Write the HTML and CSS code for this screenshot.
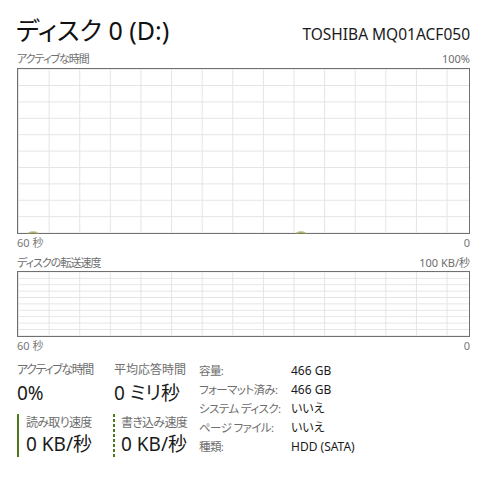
FILE: index.html
```html
<!DOCTYPE html>
<html lang="ja">
<head>
<meta charset="utf-8">
<title>ディスク 0 (D:)</title>
<link rel="stylesheet" href="styles.css">
</head>
<body>
<div class="page">
  <header class="head">
    <h1 class="title">ディスク 0 (D:)</h1>
    <div class="model">TOSHIBA MQ01ACF050</div>
  </header>

  <div class="axis axis-top first"><span class="kana">アクティブな時間</span><span>100%</span></div>
  <div class="chart chart-active">
    <span class="blip blip-a"></span>
    <span class="blip blip-b"></span>
  </div>
  <div class="axis axis-bottom"><span>60 秒</span><span>0</span></div>

  <div class="axis axis-top second"><span class="kana">ディスクの転送速度</span><span>100 KB/秒</span></div>
  <div class="chart chart-transfer"></div>
  <div class="axis axis-bottom"><span>60 秒</span><span>0</span></div>

  <section class="stats">
    <div class="col col-1">
      <div class="label kana-wide">アクティブな時間</div>
      <div class="value">0%</div>
      <div class="rate rate-read">
        <div class="label kana-some">読み取り速度</div>
        <div class="value">0 KB/秒</div>
      </div>
    </div>
    <div class="col col-2">
      <div class="label pad">平均応答時間</div>
      <div class="value pad">0 ミリ秒</div>
      <div class="rate rate-write">
        <div class="label kana-some">書き込み速度</div>
        <div class="value">0 KB/秒</div>
      </div>
    </div>
    <dl class="props">
      <dt>容量:</dt><dd>466 GB</dd>
      <dt>フォーマット済み:</dt><dd>466 GB</dd>
      <dt>システム ディスク:</dt><dd>いいえ</dd>
      <dt>ページ ファイル:</dt><dd>いいえ</dd>
      <dt>種類:</dt><dd>HDD (SATA)</dd>
    </dl>
  </section>
</div>
</body>
</html>
```

FILE: styles.css
```css
* { box-sizing: border-box; }

html, body {
  margin: 0;
  padding: 0;
  background: #ffffff;
}

body {
  font-family: "Noto Sans", "Noto Sans CJK JP", sans-serif;
  font-feature-settings: "palt";
  color: #1a1a1a;
}

.page {
  width: 493px;
  height: 477px;
  padding: 15px 23px 0 17px;
}

.head {
  display: flex;
  justify-content: space-between;
  align-items: baseline;
}

.title {
  margin: 0 0 0 -1px;
  font-size: 25px;
  font-weight: 400;
  line-height: 30px;
  color: #111;
}

.model {
  font-size: 15.5px;
  line-height: 20px;
  color: #1a1a1a;
}

.axis {
  display: flex;
  justify-content: space-between;
  font-size: 11px;
  line-height: 14px;
  height: 14px;
  color: #6e6e6e;
}

.kana { letter-spacing: -1px; }
.kana-wide { letter-spacing: -1.4px; }
.kana-some { letter-spacing: -0.7px; }

.axis.first { margin-top: 7px; }
.axis.second { margin-top: 6px; }
.axis-bottom { margin-top: 2px; color: #777; }

.chart {
  position: relative;
  border: 1px solid #707070;
  background-color: #fff;
  background-image:
    linear-gradient(to right, transparent calc(100% - 1px), #e4e4e4 calc(100% - 1px)),
    linear-gradient(to bottom, transparent calc(100% - 1px), #e4e4e4 calc(100% - 1px));
  background-size: 30.62px 100%, 100% 16.4px;
  background-position: 1px 0, 0 0.6px;
}

.chart-active {
  margin-top: 2px;
  height: 166px;
}

.chart-transfer {
  margin-top: 1px;
  height: 66px;
  background-size: 30.62px 100%, 100% 6.4px;
  background-position: 1px 0, 0 0.4px;
}

.blip {
  position: absolute;
  bottom: -1px;
  width: 12px;
  height: 3px;
  border-radius: 50% 50% 0 0 / 100% 100% 0 0;
  background: radial-gradient(ellipse at 50% 100%, rgba(120, 120, 60, 0.85) 0%, rgba(160, 160, 90, 0.6) 55%, rgba(220, 220, 170, 0.2) 100%);
}

.blip-a { left: 9px; }
.blip-b { left: 277px; }

.stats {
  margin-top: 8px;
  display: grid;
  grid-template-columns: 96px 86px 1fr;
}

.label {
  font-size: 12px;
  line-height: 17px;
  color: #6e6e6e;
}

.value {
  margin-top: 2px;
  font-size: 19px;
  line-height: 26px;
  color: #1a1a1a;
}

.pad { padding-left: 1px; }

.rate {
  margin-top: 8px;
}

.rate .label { line-height: 17px; }
.rate .value { margin-top: 0; }

.rate-read {
  border-left: 2px solid #4e7a1c;
  padding-left: 7px;
}

.rate-write {
  padding-left: 8px;
  background: repeating-linear-gradient(to bottom, #4e7a1c 0 3px, transparent 3px 5px) left top / 2px 100% no-repeat;
}

.props {
  margin: 1px 0 0;
  display: grid;
  grid-template-columns: 92px 1fr;
  font-size: 12px;
  line-height: 18px;
}

.props dt {
  color: #6e6e6e;
  font-size: 11.5px;
  letter-spacing: -0.6px;
}

.props dd {
  margin: 0;
  color: #1a1a1a;
}
```
